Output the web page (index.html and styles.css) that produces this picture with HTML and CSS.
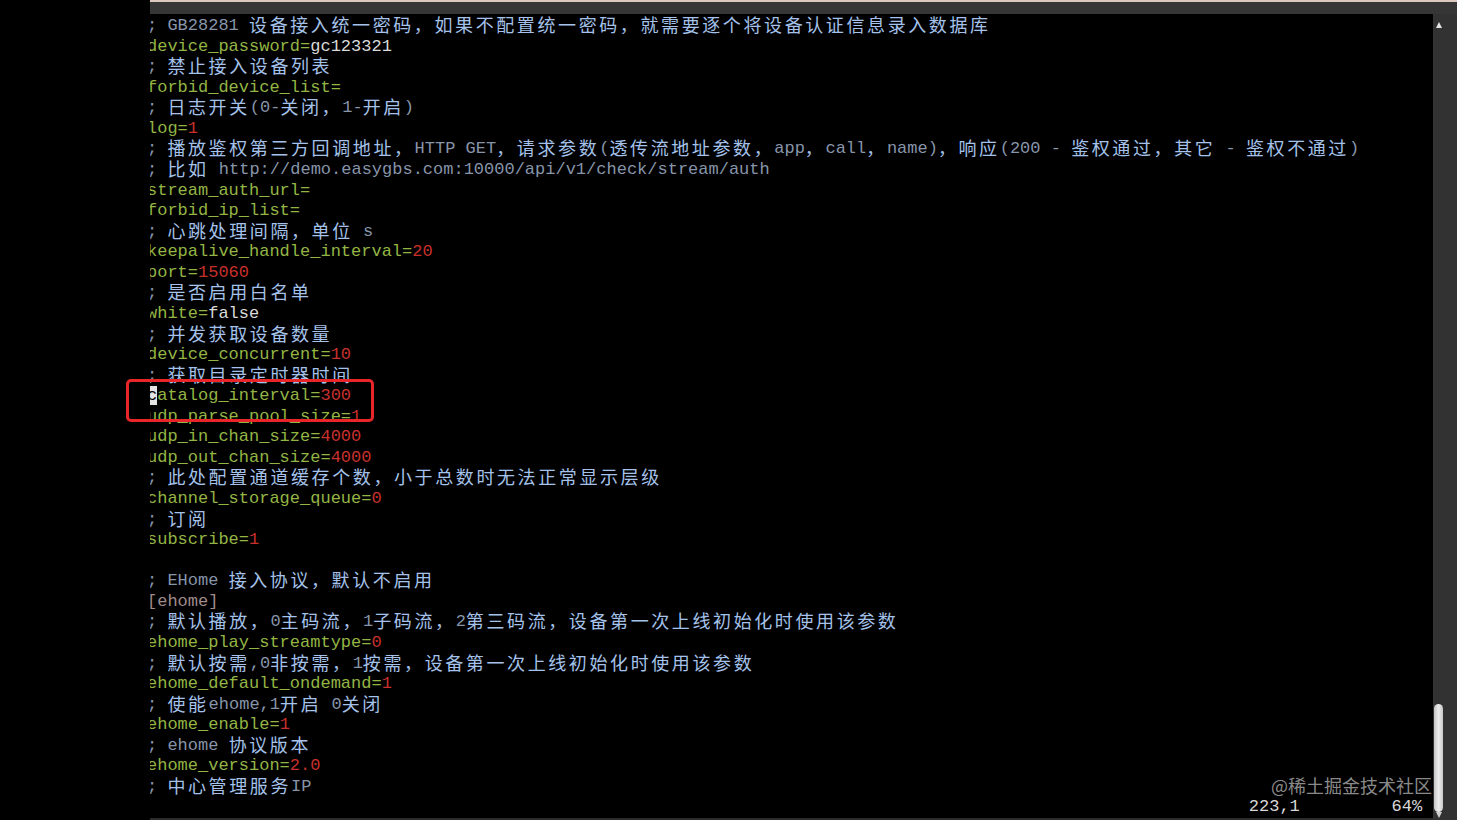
FILE: index.html
```html
<!DOCTYPE html>
<html lang="zh-CN">

<head>
    <meta charset="UTF-8">
    <meta name="viewport" content="width=device-width, initial-scale=1.0">
    <title>config.ini - vim</title>
    <link rel="stylesheet" href="styles.css">
</head>

<body>
    <div class="screen">
        <div class="side"></div>

        <div class="window">
            <div class="topbar"></div>

            <div class="main">
                <div class="term">
                    <div class="lines">
                        <div class="ln c">; GB28281 <span class="zh">设备接入统一密码，如果不配置统一密码，就需要逐个将设备认证信息录入数据库</span></div>
                        <div class="ln"><span class="k">device_password=</span><span class="v">gc123321</span></div>
                        <div class="ln c">; <span class="zh">禁止接入设备列表</span></div>
                        <div class="ln"><span class="k">forbid_device_list=</span></div>
                        <div class="ln c">; <span class="zh">日志开关</span>(0-<span class="zh">关闭，</span>1-<span class="zh">开启</span>)</div>
                        <div class="ln"><span class="k">log=</span><span class="n">1</span></div>
                        <div class="ln c">; <span class="zh">播放鉴权第三方回调地址，</span>HTTP GET<span class="zh">，请求参数</span>(<span class="zh">透传流地址参数，</span>app<span class="zh">，</span>call<span class="zh">，</span>name)<span class="zh">，响应</span>(200 - <span class="zh">鉴权通过，其它</span> - <span class="zh">鉴权不通过</span>)</div>
                        <div class="ln c">; <span class="zh">比如</span> http://demo.easygbs.com:10000/api/v1/check/stream/auth</div>
                        <div class="ln"><span class="k">stream_auth_url=</span></div>
                        <div class="ln"><span class="k">forbid_ip_list=</span></div>
                        <div class="ln c">; <span class="zh">心跳处理间隔，单位</span> s</div>
                        <div class="ln"><span class="k">keepalive_handle_interval=</span><span class="n">20</span></div>
                        <div class="ln"><span class="k">port=</span><span class="n">15060</span></div>
                        <div class="ln c">; <span class="zh">是否启用白名单</span></div>
                        <div class="ln"><span class="k">white=</span><span class="v">false</span></div>
                        <div class="ln c">; <span class="zh">并发获取设备数量</span></div>
                        <div class="ln"><span class="k">device_concurrent=</span><span class="n">10</span></div>
                        <div class="ln c">; <span class="zh">获取目录定时器时间</span></div>
                        <div class="ln"><span class="cursor">c</span><span class="k">atalog_interval=</span><span class="n">300</span></div>
                        <div class="ln"><span class="k">udp_parse_pool_size=</span><span class="n">1</span></div>
                        <div class="ln"><span class="k">udp_in_chan_size=</span><span class="n">4000</span></div>
                        <div class="ln"><span class="k">udp_out_chan_size=</span><span class="n">4000</span></div>
                        <div class="ln c">; <span class="zh">此处配置通道缓存个数，小于总数时无法正常显示层级</span></div>
                        <div class="ln"><span class="k">channel_storage_queue=</span><span class="n">0</span></div>
                        <div class="ln c">; <span class="zh">订阅</span></div>
                        <div class="ln"><span class="k">subscribe=</span><span class="n">1</span></div>
                        <div class="ln"></div>
                        <div class="ln c">; EHome <span class="zh">接入协议，默认不启用</span></div>
                        <div class="ln sec">[ehome]</div>
                        <div class="ln c">; <span class="zh">默认播放，</span>0<span class="zh">主码流，</span>1<span class="zh">子码流，</span>2<span class="zh">第三码流，设备第一次上线初始化时使用该参数</span></div>
                        <div class="ln"><span class="k">ehome_play_streamtype=</span><span class="n">0</span></div>
                        <div class="ln c">; <span class="zh">默认按需</span>,0<span class="zh">非按需，</span>1<span class="zh">按需，设备第一次上线初始化时使用该参数</span></div>
                        <div class="ln"><span class="k">ehome_default_ondemand=</span><span class="n">1</span></div>
                        <div class="ln c">; <span class="zh">使能</span>ehome,1<span class="zh">开启</span> 0<span class="zh">关闭</span></div>
                        <div class="ln"><span class="k">ehome_enable=</span><span class="n">1</span></div>
                        <div class="ln c">; ehome <span class="zh">协议版本</span></div>
                        <div class="ln"><span class="k">ehome_version=</span><span class="n">2.0</span></div>
                        <div class="ln c">; <span class="zh">中心管理服务</span>IP</div>
                        <div class="ln status">                                                                                                            223,1         64%</div>
                    </div>
                </div>

                <div class="scrollbar">
                    <div class="arrow up"></div>
                    <div class="track"></div>
                    <div class="thumb"></div>
                    <div class="arrow down"></div>
                </div>
            </div>
        </div>

        <!-- 标注框 -->
        <div class="mark"></div>
        <div class="watermark">@稀土掘金技术社区</div>
    </div>
</body>

</html>
```

FILE: styles.css
```css
html, body {
    margin: 0;
    padding: 0;
    background-color: #000000;
    overflow: hidden;
}

.screen {
    position: relative;
    display: flex;
    width: 1457px;
    height: 820px;
}

.side {
    width: 150px;
    background-color: #000000;
}

.window {
    flex: 1;
    display: flex;
    flex-direction: column;
}

.topbar {
    height: 16px;
    box-sizing: border-box;
    border-top: 2px solid #dcc8be;
    background-color: #363636;
}

.main {
    flex: 1;
    display: flex;
}

.term {
    flex: 1;
    overflow: hidden;
    background-color: #000000;
    box-sizing: border-box;
    border-bottom: 2px solid #2c2c2c;
}

.lines {
    margin-left: -3px;
    padding-top: 2px;
    font-family: "Liberation Mono", "Noto Sans CJK SC", monospace;
    font-size: 17px;
    color: #d4d4d4;
}

.ln {
    height: 20.57px;
    line-height: 20.57px;
    white-space: pre;
}

/* 中文占两格 */
.zh {
    font-family: "Noto Sans CJK SC", sans-serif;
    font-size: 18px;
    line-height: 0;
    vertical-align: -2px;
    letter-spacing: 2.6px;
    color: #a4c2ea;
}

.c {
    color: #8795aa;
}

.k {
    color: #93b544;
}

.v {
    color: #dadada;
}

.n {
    color: #c8302c;
}

.sec {
    color: #a08c8c;
}

.cursor {
    background-color: #e4e4e4;
    color: #000000;
}

.status {
    color: #d8d8d8;
}

.scrollbar {
    width: 24px;
    display: flex;
    flex-direction: column;
    align-items: flex-start;
    box-sizing: border-box;
    padding: 8px 0 2px 1px;
    background-color: #323232;
}

.arrow {
    width: 0;
    height: 0;
    margin-left: 2px;
    border-left: 3px solid transparent;
    border-right: 3px solid transparent;
}

.arrow.up {
    border-bottom: 6px solid #e6e6e6;
}

.arrow.down {
    border-top: 6px solid #cfcfcf;
}

.track {
    flex: 1;
}

.thumb {
    width: 9px;
    height: 108px;
    border-radius: 5px;
    background: linear-gradient(to right, #c4c4c4, #ececec 50%, #c8c8c8);
}

.mark {
    position: absolute;
    left: 126px;
    top: 379px;
    width: 248px;
    height: 43px;
    box-sizing: border-box;
    border: 3px solid #e8262a;
    border-radius: 5px;
}

.watermark {
    position: absolute;
    right: 25px;
    top: 774px;
    font-family: "Noto Sans CJK SC", sans-serif;
    font-size: 18px;
    line-height: 22px;
    color: rgba(200, 200, 200, .7);
}
```
